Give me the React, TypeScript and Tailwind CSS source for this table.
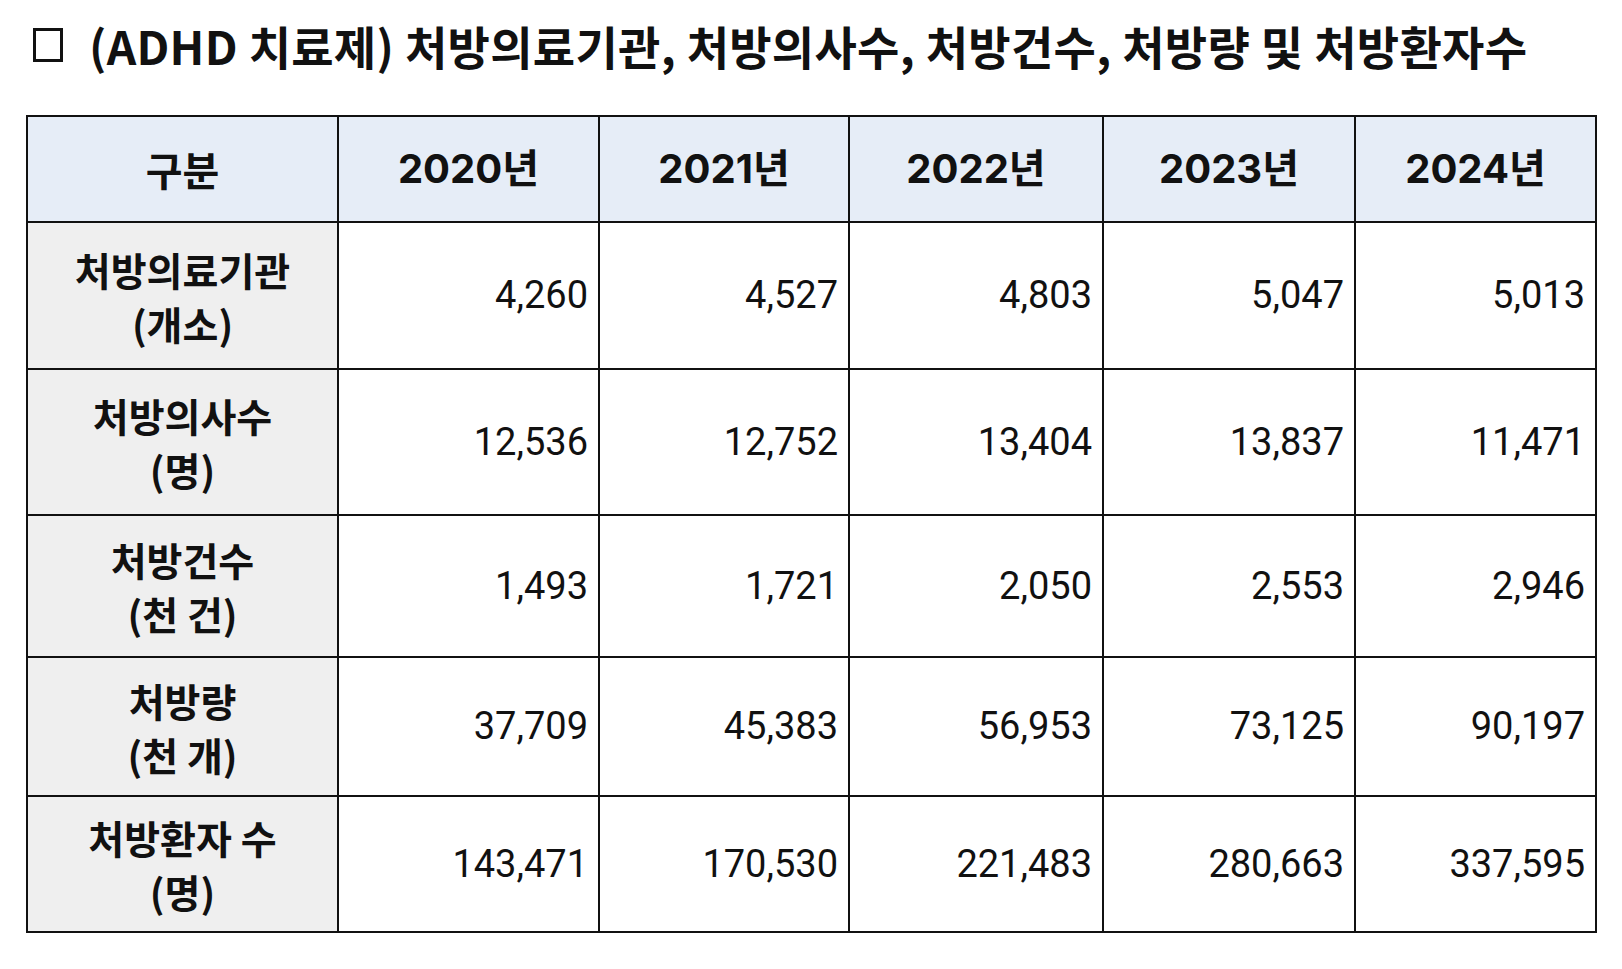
const years = ["2020년", "2021년", "2022년", "2023년", "2024년"];

const rows: { label: string; unit: string; values: string[] }[] = [
  { label: "처방의료기관", unit: "(개소)", values: ["4,260", "4,527", "4,803", "5,047", "5,013"] },
  { label: "처방의사수", unit: "(명)", values: ["12,536", "12,752", "13,404", "13,837", "11,471"] },
  { label: "처방건수", unit: "(천 건)", values: ["1,493", "1,721", "2,050", "2,553", "2,946"] },
  { label: "처방량", unit: "(천 개)", values: ["37,709", "45,383", "56,953", "73,125", "90,197"] },
  { label: "처방환자 수", unit: "(명)", values: ["143,471", "170,530", "221,483", "280,663", "337,595"] },
];

const rowHeights = ["h-[147px]", "h-[146px]", "h-[142px]", "h-[139px]", "h-[136px]"];

const kr = { fontFamily: '"Noto Sans CJK KR", "Noto Sans", sans-serif' };
const head = { fontFamily: 'Inter, "Noto Sans CJK KR", sans-serif' };
const num = { fontFamily: 'Roboto, "Noto Sans CJK KR", sans-serif' };

export default function App() {
  return (
    <div className="min-h-screen w-[1622px] bg-white text-[#111]">
      {/* title */}
      <div className="flex items-center gap-[26px] pl-[33px] pt-[17px]" style={kr}>
        <span className="block h-[34px] w-[30px] border-[3px] border-[#111]" />
        <h1 className="text-[46px] font-bold leading-[56px] tracking-[0.3px]">
          (ADHD 치료제) 처방의료기관, 처방의사수, 처방건수, 처방량 및 처방환자수
        </h1>
      </div>

      <div className="pl-[26px] pt-[42px]">
        <table className="w-[1569px] table-fixed border-collapse">
          <colgroup>
            <col className="w-[311px]" />
            <col className="w-[261px]" />
            <col className="w-[250px]" />
            <col className="w-[254px]" />
            <col className="w-[252px]" />
            <col className="w-[241px]" />
          </colgroup>
          <thead>
            <tr className="h-[106px] bg-[#e6edf7]">
              <th className="border-2 border-[#111] text-[40px] font-bold" style={kr}>
                구분
              </th>
              {years.map((y) => (
                <th key={y} className="border-2 border-[#111] text-[40px] font-bold" style={head}>
                  {y}
                </th>
              ))}
            </tr>
          </thead>
          <tbody>
            {rows.map((r, i) => (
              <tr key={r.label} className={rowHeights[i]}>
                <td
                  className="border-2 border-[#111] bg-[#efefef] text-center text-[39px] font-bold leading-[54px]"
                  style={kr}
                >
                  <div>{r.label}</div>
                  <div>{r.unit}</div>
                </td>
                {r.values.map((v, j) => (
                  <td
                    key={j}
                    className="border-2 border-[#111] pr-[10px] text-right text-[38px] font-normal"
                    style={num}
                  >
                    {v}
                  </td>
                ))}
              </tr>
            ))}
          </tbody>
        </table>
      </div>
    </div>
  );
}
